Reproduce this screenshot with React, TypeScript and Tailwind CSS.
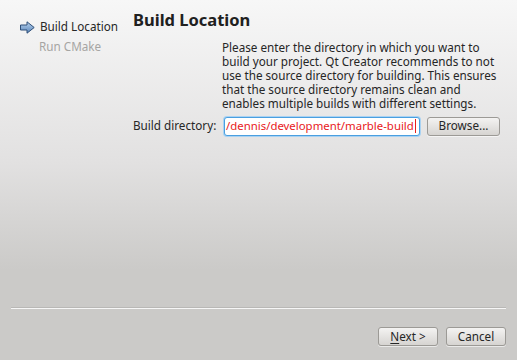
import React from "react";

function ArrowIcon() {
  return (
    <svg width="15" height="13" viewBox="0 0 15 13" className="shrink-0">
      <defs>
        <linearGradient id="ag" x1="0" y1="0" x2="0" y2="1">
          <stop offset="0" stopColor="#b9d3ee" />
          <stop offset="1" stopColor="#5a86bb" />
        </linearGradient>
      </defs>
      <path d="M0.5 4 H7 V0.8 L14.2 6.5 L7 12.2 V9 H0.5 Z" fill="url(#ag)" stroke="#2f4f78" strokeWidth="1" strokeLinejoin="round" />
    </svg>
  );
}

function Btn({ children, w }: { children: React.ReactNode; w: string }) {
  return (
    <button
      className={`${w} h-[19px] rounded-[3px] border border-[#9c9a96] bg-gradient-to-b from-[#f4f3f2] to-[#d6d4d1] text-[11.7px] text-[#262626] shadow-[0_1px_0_rgba(255,255,255,0.6)] flex items-center justify-center`}
    >
      {children}
    </button>
  );
}

export default function App() {
  return (
    <div
      className="w-[517px] h-[360px] flex flex-col bg-gradient-to-b from-[#f7f7f7] via-[#e2e1e1] via-45% to-[#cbcac8] to-75% text-[#262626] overflow-hidden"
      style={{ fontFamily: '"Noto Sans", "DejaVu Sans", sans-serif' }}
    >
      <div className="flex flex-1">
        {/* steps */}
        <div className="w-[133px] pl-[20px] pt-[19px] text-[11.7px]">
          <div className="flex items-center gap-[5px] h-[16px]">
            <ArrowIcon />
            <span>Build Location</span>
          </div>
          <div className="pl-[19px] mt-[3px] text-[#a6a5a3]">Run CMake</div>
        </div>

        {/* page */}
        <div className="flex-1 pt-[8px] pr-[11px]">
          <h1 className="text-[16.5px] font-bold leading-[24px] text-[#202020]">Build Location</h1>
          <p className="ml-[89px] mt-[8px] text-[11.7px] leading-[14px]">
            Please enter the directory in which you want to
            <br />
            build your project. Qt Creator recommends to not
            <br />
            use the source directory for building. This ensures
            <br />
            that the source directory remains clean and
            <br />
            enables multiple builds with different settings.
          </p>
          <div className="flex items-center mt-[6px] h-[20px]">
            <span className="text-[11.7px] w-[91px] shrink-0 whitespace-nowrap">Build directory:</span>
            <div className="w-[196px] h-[19px] rounded-[3px] border border-[#4a9fe0] bg-white shadow-[0_0_0_1px_#a9d2f2] flex items-center pl-[1px] overflow-hidden">
              <span className="text-[11.4px] text-[#e8201c] whitespace-nowrap">/dennis/development/marble-build</span>
              <span className="shrink-0 w-[1px] h-[14px] bg-[#e8201c] ml-[1px]" />
            </div>
            <div className="ml-[7px]">
              <Btn w="w-[73px]">Browse...</Btn>
            </div>
          </div>
        </div>
      </div>

      {/* footer */}
      <div className="mx-[11px] border-t border-[#f6f6f6] shadow-[0_-1px_0_#b9b8b6]" />
      <div className="flex justify-end gap-[8px] pr-[11px] pt-[18px] pb-[14px]">
        <Btn w="w-[60px]">
          <span>
            <span className="underline underline-offset-2">N</span>ext &gt;
          </span>
        </Btn>
        <Btn w="w-[60px]">Cancel</Btn>
      </div>
    </div>
  );
}
